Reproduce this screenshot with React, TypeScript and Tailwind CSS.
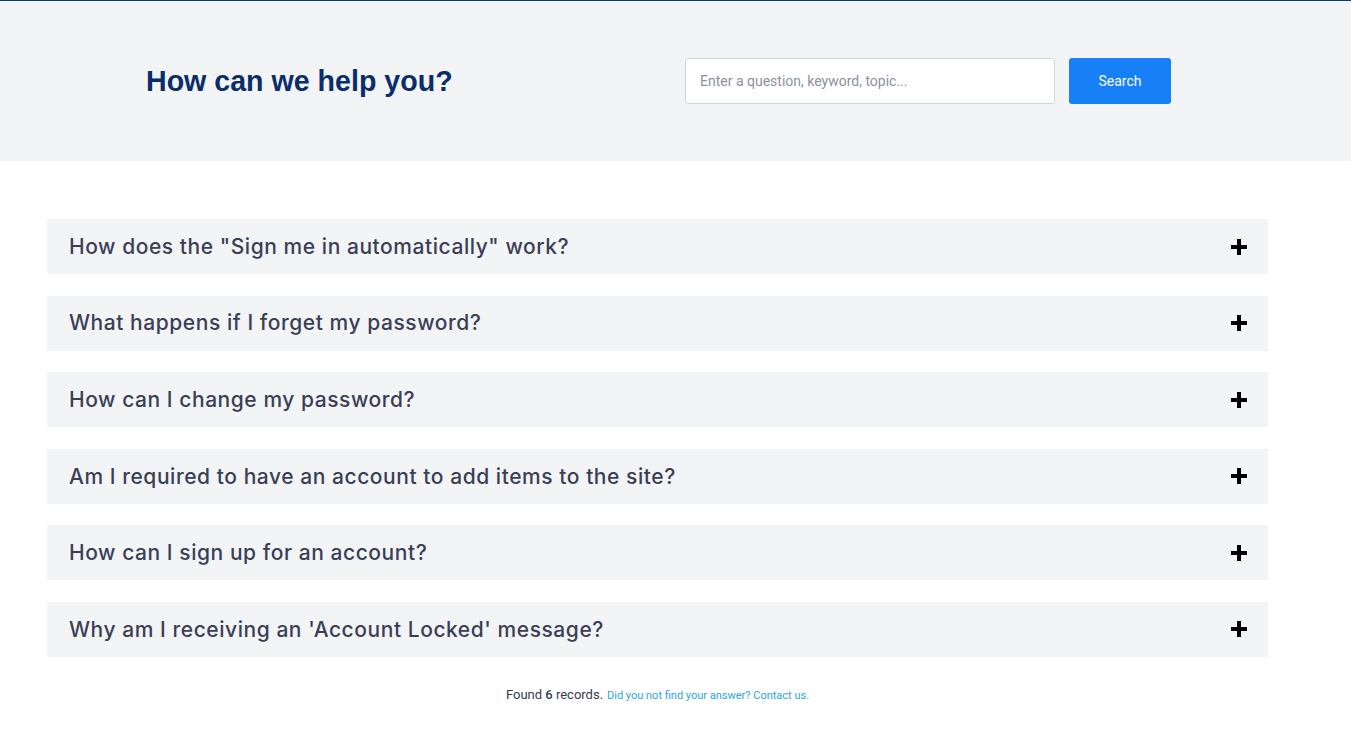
const QUESTIONS = [
  'How does the "Sign me in automatically" work?',
  'What happens if I forget my password?',
  'How can I change my password?',
  'Am I required to have an account to add items to the site?',
  'How can I sign up for an account?',
  "Why am I receiving an 'Account Locked' message?",
]

function PlusIcon() {
  return (
    <svg width="16" height="16" viewBox="0 0 16 16" className="shrink-0">
      <rect x="6" y="0" width="4" height="16" fill="#000" />
      <rect x="0" y="6" width="16" height="4" fill="#000" />
    </svg>
  )
}

function FaqRow({ q }: { q: string }) {
  return (
    <div className="flex h-[55px] items-center justify-between bg-[#f3f4f6] pl-[22px] pr-[21px]">
      <span className="text-[21px] font-medium tracking-[0.55px] text-[#3a3f56] [font-family:Inter,'Noto_Sans',sans-serif]">
        {q}
      </span>
      <PlusIcon />
    </div>
  )
}

export default function App() {
  return (
    <div className="min-h-[741px] bg-white [font-family:Roboto,'Liberation_Sans',sans-serif]">
      <div className="border-t border-[#0b3a7e] bg-[#f3f4f6]">
        <div className="flex h-[160px] items-center pl-[146px]">
          <h1 className="w-[539px] text-[28.6px] font-bold text-[#0a2d6b] [font-family:'Liberation_Sans',Arial,sans-serif]">
            How can we help you?
          </h1>
          <div className="flex gap-[14px]">
            <input
              className="h-[46px] w-[370px] rounded-[3px] border border-[#d1d5db] bg-white px-[14px] text-[14px] text-gray-700 outline-none placeholder:text-[#8d919c]"
              placeholder="Enter a question, keyword, topic..."
            />
            <button className="h-[46px] w-[102px] rounded-[3px] bg-[#1780f6] text-[14px] text-white">
              Search
            </button>
          </div>
        </div>
      </div>

      <div className="ml-[47px] mt-[58px] flex w-[1221px] flex-col gap-[21.6px]">
        {QUESTIONS.map((q) => (
          <FaqRow key={q} q={q} />
        ))}
      </div>

      <div className="ml-[47px] mt-[25px] w-[1221px] text-center">
        <span className="text-[13px] text-[#333a4f]">
          Found <span className="font-medium">6</span> records.
        </span>{' '}
        <a className="text-[11px] text-[#2aa5e6]" href="#">
          Did you not find your answer? Contact us.
        </a>
      </div>
    </div>
  )
}
